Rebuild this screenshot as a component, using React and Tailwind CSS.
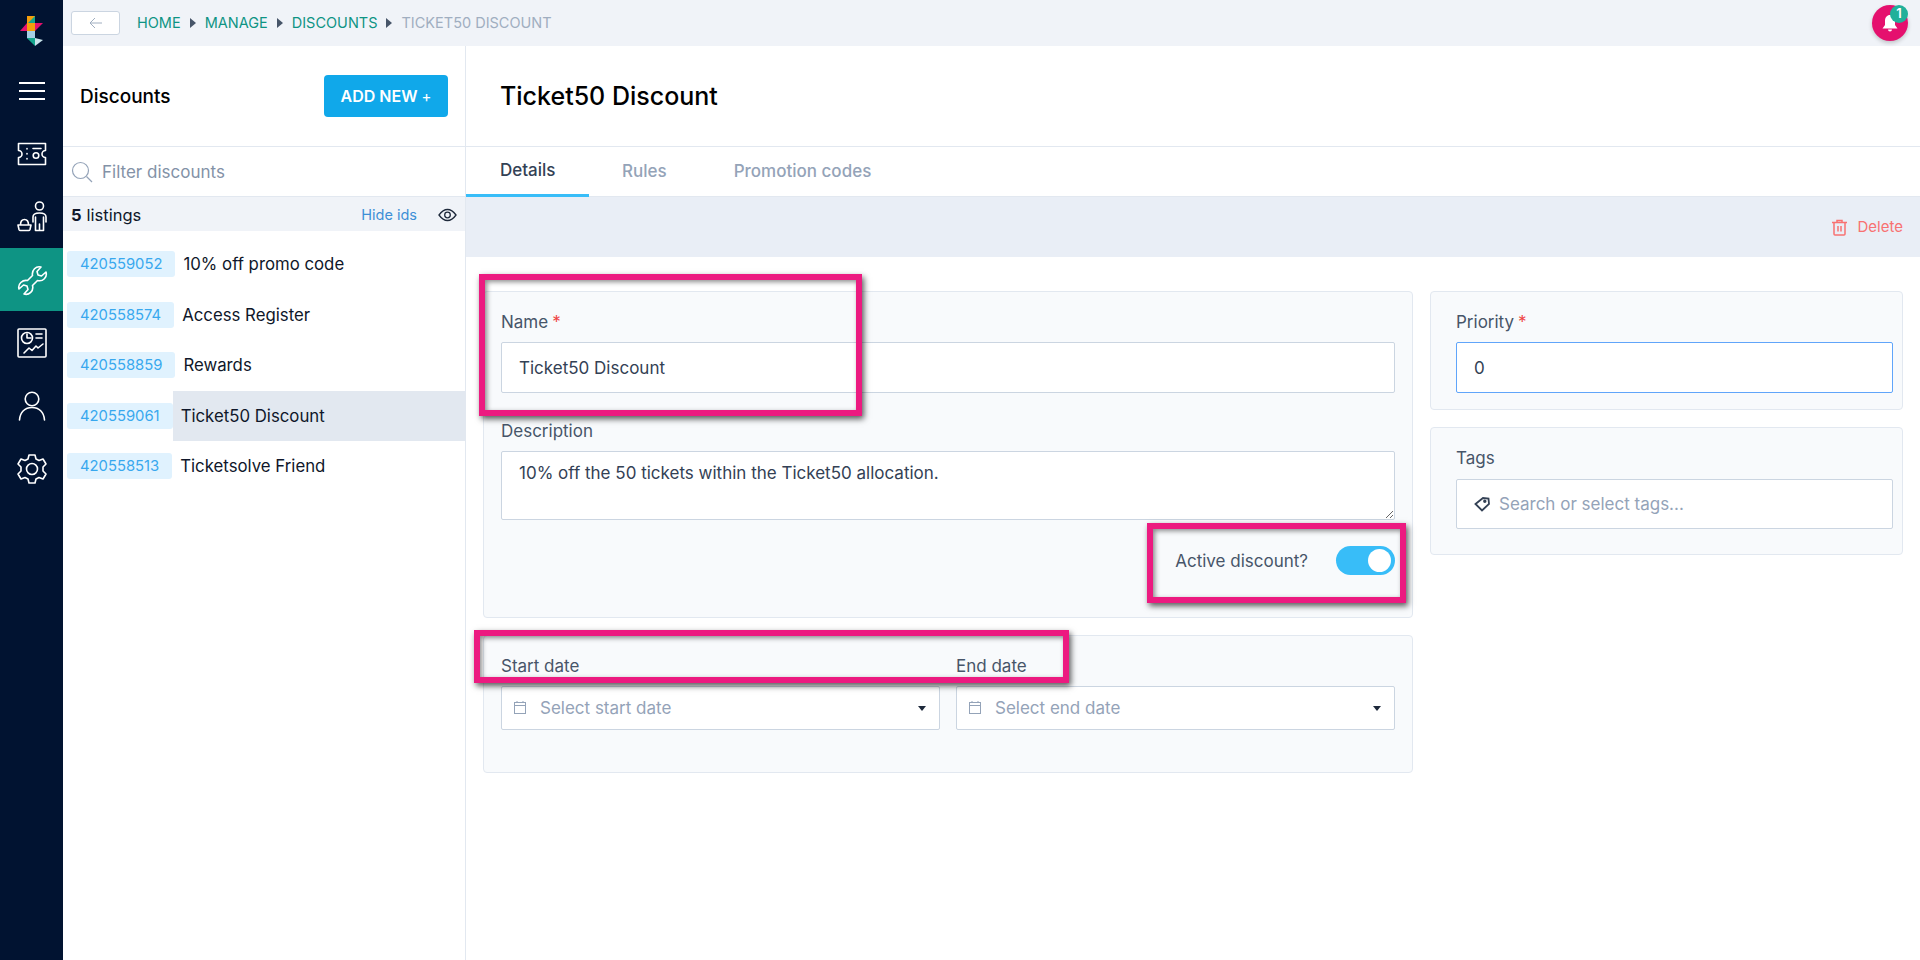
import React from 'react';

const font = { fontFamily: '"Inter", "Liberation Sans", sans-serif' };

const items = [
  { id: '420559052', name: '10% off promo code' },
  { id: '420558574', name: 'Access Register' },
  { id: '420558859', name: 'Rewards' },
  { id: '420559061', name: 'Ticket50 Discount', active: true },
  { id: '420558513', name: 'Ticketsolve Friend' },
];

function Logo() {
  return (
    <svg width="24" height="32" viewBox="0 0 24 32">
      <rect x="7" y="0" width="8" height="7" fill="#f59e0b" />
      <polygon points="15,0 15,7 8,7" fill="#14a58c" />
      <polygon points="0,15 7,7 23,7 15,15" fill="#e5106e" />
      <polygon points="7,7 15,7 15,15 7,15" fill="#f59e0b" />
      <rect x="7" y="15" width="8" height="7" fill="#a6cfe6" />
      <polygon points="7,22 15,22 15,29 7,22" fill="#14a58c" />
      <polygon points="15,22 23,24 15,30" fill="#c7e3ea" />
      <polygon points="7,22 15,30 15,22" fill="#14a58c" />
    </svg>
  );
}

function SideIcon({ active, children }) {
  return (
    <div className={`h-[63px] flex items-center justify-center ${active ? 'bg-[#0e9484]' : ''}`}>
      <svg width="32" height="32" viewBox="0 0 32 32" fill="none" stroke="#fff" strokeWidth="1.6" strokeLinecap="round" strokeLinejoin="round">
        {children}
      </svg>
    </div>
  );
}

function Caret() {
  return <span className="mx-[9px] w-0 h-0 border-y-[5px] border-y-transparent border-l-[6px] border-l-[#475569]" />;
}

function Asterisk() {
  return <span className="text-[#ef4444] ml-[4px]">*</span>;
}

function Label({ children, className = '' }) {
  return <div className={`text-[17px] leading-[20px] text-[#475569] ${className}`}>{children}</div>;
}

function DateField({ placeholder }) {
  return (
    <div className="h-[44px] flex-1 flex items-center bg-white border border-[#cbd5e1] rounded-[2px] pl-[11px] pr-[13px]">
      <svg width="14" height="15" viewBox="0 0 14 15" fill="none" stroke="#94a3b8" strokeWidth="1" className="-mt-[2px]">
        <rect x="1.5" y="2.5" width="11" height="11" />
        <path d="M1.5 5.5h11M4 1v2M10 1v2" />
      </svg>
      <span className="ml-[13px] pt-[2px] text-[17px] text-[#94a3b8] flex-1">{placeholder}</span>
      <span className="w-0 h-0 border-x-[4.5px] border-x-transparent border-t-[5px] border-t-[#1e293b]" />
    </div>
  );
}

function Marker({ className }) {
  return <div className={`absolute border-[6px] border-[#ec1a80] shadow-[2px_3px_6px_rgba(0,0,0,0.65),inset_2px_2px_5px_rgba(0,0,0,0.45)] pointer-events-none ${className}`} />;
}

export default function App() {
  return (
    <div className="relative flex h-screen w-full overflow-hidden bg-white text-[#0f172a]" style={font}>
      <aside className="w-[63px] shrink-0 bg-[#011331]">
        <div className="h-[59px] flex items-start justify-center pt-[16px]">
          <Logo />
        </div>
        <div className="h-[63px] flex items-center justify-center">
          <div className="w-[26px] flex flex-col gap-[6px]">
            <div className="h-[2px] bg-white" />
            <div className="h-[2px] bg-white" />
            <div className="h-[2px] bg-white" />
          </div>
        </div>
        <SideIcon>
          <path d="M2.500 5.500h27v7a3.500 3.500 0 0 0 0 7v7h-27v-7a3.500 3.500 0 0 0 0-7z" />
          <path d="M11 10.500v.5M11 15.500v.5M11 20.500v.5M17 10.500h8" />
          <circle cx="20" cy="17.500" r="2.800" />
        </SideIcon>
        <SideIcon>
          <circle cx="23.500" cy="5" r="4" />
          <path d="M17 21v-5c0-2.500 2.500-4 6.500-4s6.500 1.500 6.500 4v5M19.500 16v13.500h8V16M23.500 23v6.500" />
          <path d="M2 24h13l-1 4.500a1.500 1.500 0 0 1-1.500 1H4.500a1.500 1.500 0 0 1-1.500-1zM4.500 24c0-3.500 1.500-5.500 4-5.500s4 2 4 5.500" />
        </SideIcon>
        <SideIcon active>
          <path d="M25 3c-5-1.500-9.500 3.500-8.500 8.500L11.500 16.500C6.500 15.500 1.500 20 3 25l4.500-4 3.500 1 1 3.500-4 4.500c5 1.500 10-3 8.500-8.500l5-5c5.500 1.500 10-3.500 8.500-8.500l-4.500 4-3.500-1-1-3.500z" />
        </SideIcon>
        <SideIcon>
          <rect x="2" y="2" width="28" height="28" rx="1" />
          <circle cx="11" cy="11" r="5.500" />
          <path d="M11 7v4h4M20 7h6M20 11h6M8 26l5-5 3 2.500 4-4.500 2 2 5-4" />
        </SideIcon>
        <SideIcon>
          <circle cx="16" cy="9" r="6.800" />
          <path d="M3.500 30C4 22 9 17.500 16 17.500S28 22 28.500 30" />
        </SideIcon>
        <SideIcon>
          <circle cx="16" cy="16" r="5.500" />
          <path d="M13 2h6l1 4 3 1.500 4-1.500 3 5-3 3v4l3 3-3 5-4-1.500-3 1.500-1 4h-6l-1-4-3-1.500-4 1.500-3-5 3-3v-4l-3-3 3-5 4 1.500 3-1.500z" />
        </SideIcon>
      </aside>

      <div className="flex-1 min-w-0 flex flex-col">
        <header className="h-[46px] shrink-0 bg-[#f0f3f8] flex items-center pl-[8px] pr-[12px] relative">
          <button className="w-[49px] h-[24px] bg-white border border-[#cbd5e1] rounded-[3px] flex items-center justify-center mr-[17px]">
            <svg width="14" height="12" viewBox="0 0 14 12" fill="none" stroke="#a0aec0" strokeWidth="1">
              <path d="M13 6H1M6 1 1 6l5 5" />
            </svg>
          </button>
          <div className="flex items-center text-[14.500px] text-[#0e9484]">
            <span>HOME</span>
            <Caret />
            <span>MANAGE</span>
            <Caret />
            <span>DISCOUNTS</span>
            <Caret />
            <span className="text-[#a0aec0]">TICKET50 DISCOUNT</span>
          </div>
          <div className="ml-auto w-[36px] h-[36px] rounded-full bg-[#e5106e] shadow-[0_2px_4px_rgba(0,0,0,0.2)] flex items-center justify-center relative">
            <svg width="20" height="20" viewBox="0 0 20 20" fill="#fff">
              <path d="M10 2c3 0 5 2.500 5 6v4l2.500 3.500h-15L5 12V8c0-3.500 2-6 5-6z" />
              <path d="M8 16.500h4a2 2 0 0 1-4 0z" />
            </svg>
            <span className="absolute top-0 right-0 w-[18px] h-[18px] rounded-full bg-[#22b09a] text-white text-[13px] font-semibold flex items-center justify-center">1</span>
          </div>
        </header>

        <div className="flex-1 min-h-0 flex">
          <section className="w-[403px] shrink-0 border-r border-[#e2e8f0] flex flex-col">
            <div className="h-[101px] shrink-0 flex items-center justify-between pl-[17px] pr-[17px] border-b border-[#e2e8f0]">
              <h2 className="pt-[2px] text-[19px] font-medium text-black">Discounts</h2>
              <button className="w-[124px] h-[42px] bg-[#10a8ea] rounded-[4px] text-white text-[16px] font-semibold">
                ADD NEW <span className="font-normal text-[15px]">+</span>
              </button>
            </div>
            <div className="h-[50px] shrink-0 flex items-center pl-[8px] border-b border-[#e2e8f0]">
              <svg width="22" height="22" viewBox="0 0 22 22" fill="none" stroke="#94a3b8" strokeWidth="1.200">
                <circle cx="9.500" cy="9.500" r="8" />
                <path d="m15.500 15.500 5.500 5.500" />
              </svg>
              <span className="ml-[9px] pt-[2px] text-[17px] text-[#8392a7]">Filter discounts</span>
            </div>
            <div className="h-[34px] shrink-0 bg-[#f0f3f8] flex items-center pl-[8px] pr-[8px] pt-[2px] text-[16.500px]">
              <span className="font-bold mr-[5px]">5</span>
              <span>listings</span>
              <span className="ml-auto text-[14.500px] text-[#3d8fd6] mr-[21px]">Hide ids</span>
              <svg width="19" height="14" viewBox="0 0 19 14" fill="none" stroke="#1e293b" strokeWidth="1.300">
                <path d="M1 7c2.500-3.500 5-5.500 8.500-5.500S15.500 3.500 18 7c-2.500 3.500-5 5.500-8.500 5.500S3.500 10.500 1 7z" />
                <circle cx="9.500" cy="7" r="2.800" />
              </svg>
            </div>
            <div className="pt-[8px]">
              {items.map((it) => (
                <div key={it.id} className="h-[50.500px] flex items-center pl-[4px]">
                  <span className="h-[26px] flex items-center px-[13px] bg-[#e0f2fe] rounded-[3px] text-[14.800px] text-[#38a8ee]">{it.id}</span>
                  <span className={`h-full flex-1 flex items-center pl-[8px] pt-[1px] text-[16.800px] ${it.active ? 'bg-[#e2e8f0]' : ''}`}>{it.name}</span>
                </div>
              ))}
            </div>
          </section>

          <main className="flex-1 min-w-0 flex flex-col">
            <div className="h-[101px] shrink-0 flex items-center pl-[34px] border-b border-[#e2e8f0]">
              <h1 className="pt-[2px] text-[25px] font-medium text-black">Ticket50 Discount</h1>
            </div>
            <div className="h-[50px] shrink-0 flex items-stretch pt-[1px] text-[17px] font-medium border-b border-[#e2e8f0]">
              <div className="w-[123px] pl-[34px] flex items-center text-[#334155] border-b-[3px] border-[#38bdf8] -mb-px">Details</div>
              <div className="ml-[33px] flex items-center text-[#94a3b8]">Rules</div>
              <div className="ml-[67px] flex items-center text-[#94a3b8]">Promotion codes</div>
            </div>
            <div className="h-[60px] shrink-0 bg-[#e9eef6] flex items-center justify-end pr-[17px] text-[15px] text-[#f87171]">
              <svg width="17" height="17" viewBox="0 0 17 17" fill="none" stroke="#f87171" strokeWidth="1.500" className="mr-[10px]">
                <path d="M1 3.500h15M3 3.500V15a1 1 0 0 0 1 1h9a1 1 0 0 0 1-1V3.500M6 3.500V1.500h5v2M7 7v5.500M10 7v5.500" />
              </svg>
              Delete
            </div>

            <div className="flex gap-[17px] pl-[17px] pr-[17px] pt-[34px]">
              <div className="w-[930px] shrink-0 flex flex-col gap-[17px]">
                <div className="h-[327px] bg-[#f8fafc] border border-[#e2e8f0] rounded-[4px] px-[17px] pt-[20px]">
                  <Label>Name<Asterisk /></Label>
                  <input readOnly value="Ticket50 Discount" className="mt-[10px] w-full h-[51px] bg-white border border-[#cbd5e1] rounded-[2px] px-[17px] text-[17px] text-[#334155]" />
                  <Label className="mt-[28px]">Description</Label>
                  <textarea readOnly value="10% off the 50 tickets within the Ticket50 allocation." className="block mt-[10px] w-full h-[69px] bg-white border border-[#cbd5e1] rounded-[2px] px-[17px] py-[9px] text-[17px] text-[#334155]" />
                  <div className="mt-[26px] flex items-center justify-end">
                    <span className="pt-[2px] text-[17px] text-[#475569] mr-[28px]">Active discount?</span>
                    <div className="w-[59px] h-[29px] rounded-full bg-[#38bdf8] flex items-center justify-end pr-[4px]">
                      <div className="w-[23px] h-[23px] rounded-full bg-white" />
                    </div>
                  </div>
                </div>
                <div className="h-[138px] bg-[#f8fafc] border border-[#e2e8f0] rounded-[4px] px-[17px] pt-[20px]">
                  <div className="flex gap-[16px]">
                    <div className="flex-1"><Label>Start date</Label></div>
                    <div className="flex-1"><Label>End date</Label></div>
                  </div>
                  <div className="mt-[10px] flex gap-[16px]">
                    <DateField placeholder="Select start date" />
                    <DateField placeholder="Select end date" />
                  </div>
                </div>
              </div>

              <div className="flex-1 min-w-0 flex flex-col gap-[17px]">
                <div className="h-[119px] bg-[#f8fafc] border border-[#e2e8f0] rounded-[4px] pl-[25px] pr-[9px] pt-[20px]">
                  <Label>Priority<Asterisk /></Label>
                  <input readOnly value="0" className="mt-[10px] w-full h-[51px] bg-white border border-[#60a5fa] rounded-[2px] px-[17px] text-[17px] text-[#334155]" />
                </div>
                <div className="h-[128px] bg-[#f8fafc] border border-[#e2e8f0] rounded-[4px] pl-[25px] pr-[9px] pt-[20px]">
                  <Label>Tags</Label>
                  <div className="mt-[11px] h-[50px] bg-white border border-[#cbd5e1] rounded-[2px] flex items-center pl-[17px]">
                    <svg width="16" height="16" viewBox="0 0 16 16" fill="none" stroke="#334155" strokeWidth="1.800">
                      <path d="M1.500 8 9 2l5.500.5L15 8l-7 6.500z" />
                      <circle cx="10.800" cy="5.200" r=".8" fill="#334155" />
                    </svg>
                    <span className="ml-[9px] pt-[1px] text-[17px] text-[#94a3b8]">Search or select tags...</span>
                  </div>
                </div>
              </div>
            </div>
          </main>
        </div>
      </div>

      <Marker className="left-[479px] top-[274px] w-[383px] h-[142px]" />
      <Marker className="left-[1147px] top-[523px] w-[259px] h-[80px]" />
      <Marker className="left-[474px] top-[630px] w-[595px] h-[53px]" />
    </div>
  );
}
